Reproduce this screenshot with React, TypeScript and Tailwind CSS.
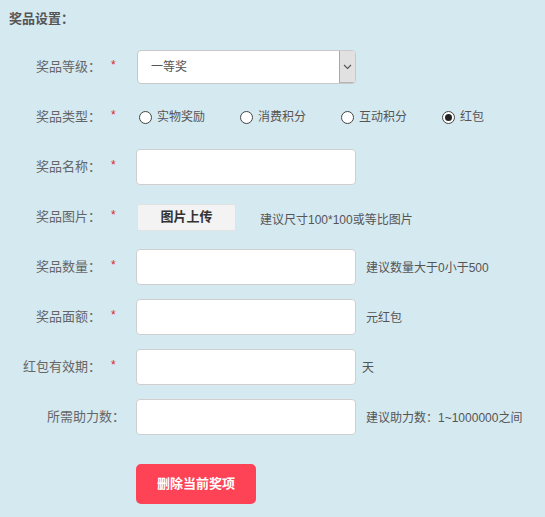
import React from "react";

const font = { fontFamily: '"Liberation Sans", "Noto Sans CJK SC", sans-serif' };

function Label({ text, star = true }: { text: string; star?: boolean }) {
  return (
    <div className="w-[136px] shrink-0 flex justify-end items-center text-[13px] text-[#666] leading-[16px]">
      <span>{text}</span>
      {star ? (
        <span className="w-[35px] pl-[10px] text-left text-[#e0242e] text-[12px] -mt-[4px]">*</span>
      ) : (
        <span className="w-[11px]" />
      )}
    </div>
  );
}

function TextInput() {
  return <div className="w-[220px] h-[36px] bg-white border border-[#cfcfcf] rounded-[4px]" />;
}

function Radio({ label, checked = false }: { label: string; checked?: boolean }) {
  return (
    <div className="w-[101px] flex items-center">
      <span className="w-[13px] h-[13px] rounded-full border border-[#444] bg-white flex items-center justify-center">
        {checked && <span className="w-[7px] h-[7px] rounded-full bg-[#222]" />}
      </span>
      <span className="ml-[5px] text-[12px] text-[#555] leading-[16px]">{label}</span>
    </div>
  );
}

function Hint({ text, ml = "ml-[10px]" }: { text: string; ml?: string }) {
  return <span className={`${ml} text-[12px] text-[#555] leading-[16px] mt-[2px]`}>{text}</span>;
}

export default function App() {
  return (
    <div className="w-[545px] h-[517px] bg-[#d5e9f1] overflow-hidden" style={font}>
      <div className="h-[42px] pl-[9px] pt-[11px] text-[13px] font-bold text-[#555] leading-[16px]">奖品设置：</div>

      <div className="h-[50px] flex items-center">
        <Label text="奖品等级：" />
        <div className="w-[219px] h-[34px] ml-[1px] bg-white border border-[#c8c8c8] rounded-[4px] flex items-stretch overflow-hidden">
          <div className="flex-1 flex items-center pl-[13px] text-[12px] text-[#555]">一等奖</div>
          <div className="w-[16px] bg-[#e1e1e1] border-l border-[#a8a8a8] border-b border-b-[#b5b5b5] flex items-center justify-center">
            <svg width="9" height="6" viewBox="0 0 9 6">
              <path d="M1 1 L4.5 4.5 L8 1" fill="none" stroke="#555" strokeWidth="1.1" />
            </svg>
          </div>
        </div>
      </div>

      <div className="h-[50px] flex items-center">
        <Label text="奖品类型：" />
        <div className="flex items-center ml-[3px]">
          <Radio label="实物奖励" />
          <Radio label="消费积分" />
          <Radio label="互动积分" />
          <Radio label="红包" checked />
        </div>
      </div>

      <div className="h-[50px] flex items-center">
        <Label text="奖品名称：" />
        <TextInput />
      </div>

      <div className="h-[50px] flex items-center">
        <Label text="奖品图片：" />
        <div className="w-[99px] h-[27px] ml-[1px] bg-[#f3f3f3] border border-[#e2e2e2] rounded-[2px] flex items-center justify-center text-[13px] font-bold text-[#333]">
          图片上传
        </div>
        <span className="ml-[24px] text-[12px] text-[#555] leading-[16px] mt-[6px]">建议尺寸100*100或等比图片</span>
      </div>

      <div className="h-[50px] flex items-center">
        <Label text="奖品数量：" />
        <TextInput />
        <Hint text="建议数量大于0小于500" />
      </div>

      <div className="h-[50px] flex items-center">
        <Label text="奖品面额：" />
        <TextInput />
        <Hint text="元红包" />
      </div>

      <div className="h-[50px] flex items-center">
        <Label text="红包有效期：" />
        <TextInput />
        <Hint text="天" ml="ml-[6px]" />
      </div>

      <div className="h-[50px] flex items-center">
        <Label text="所需助力数：" star={false} />
        <TextInput />
        <Hint text="建议助力数：1~1000000之间" />
      </div>

      <div className="mt-[22px] pl-[136px]">
        <div className="w-[120px] h-[40px] bg-[#fe4356] rounded-[5px] flex items-center justify-center text-white text-[13px] font-bold">
          删除当前奖项
        </div>
      </div>
    </div>
  );
}
